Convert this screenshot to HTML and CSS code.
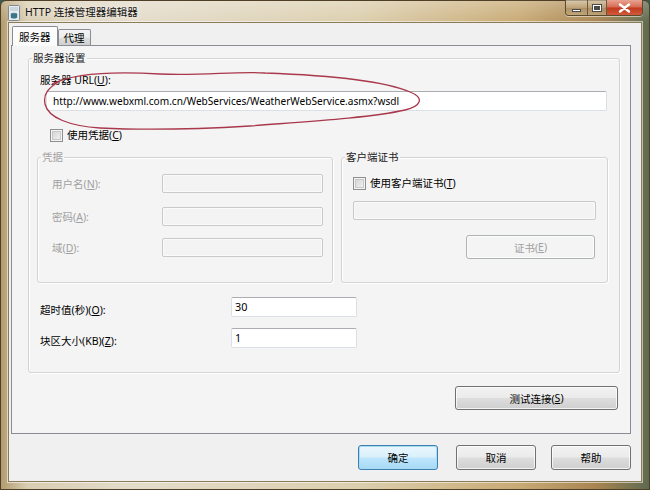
FILE: index.html
```html
<!DOCTYPE html>
<html>
<head>
<meta charset="utf-8">
<link rel="stylesheet" href="styles.css">
</head>
<body>
<div class="window">
  <div class="titlebar">
    <svg class="app-icon" width="14" height="16" viewBox="0 0 14 16">
      <rect x="1.5" y="0.5" width="11" height="15" rx="1" fill="#e8ecef" stroke="#7d8a93"/>
      <rect x="3" y="2" width="8" height="4" fill="#c9d6de"/>
      <ellipse cx="7" cy="9" rx="3.2" ry="1.3" fill="#4f8a9c"/>
      <path d="M3.8 9v3.2c0 .8 1.4 1.3 3.2 1.3s3.2-.5 3.2-1.3V9" fill="#3b7587"/>
    </svg>
    <span class="title">HTTP 连接管理器编辑器</span>
    <div class="caption-btns">
      <div class="cap cap-min"><span class="min-glyph"></span></div>
      <div class="cap cap-max"><span class="max-glyph"></span></div>
      <div class="cap cap-close">
        <svg width="13" height="10" viewBox="0 0 13 10"><path d="M2 1.5l9 7M11 1.5l-9 7" stroke="#fff" stroke-width="2.4" stroke-linecap="round"/></svg>
      </div>
    </div>
  </div>

  <div class="client">
    <div class="tabs">
      <div class="tab tab-active">服务器</div>
      <div class="tab">代理</div>
    </div>
    <div class="panel">
      <div class="group main-group">
        <div class="glabel">服务器设置</div>
        <div class="lbl url-lbl">服务器 URL(<u>U</u>):</div>
        <div class="input url-input">http://www.webxml.com.cn/WebServices/WeatherWebService.asmx?wsdl</div>
        <div class="check cred-check"><span class="box"></span><span>使用凭据(<u>C</u>)</span></div>

        <div class="subgroups">
          <div class="group cred-group disabled">
            <div class="glabel">凭据</div>
            <div class="frow r1"><span class="flabel">用户名(<u>N</u>):</span><span class="input dis-input"></span></div>
            <div class="frow r2"><span class="flabel">密码(<u>A</u>):</span><span class="input dis-input"></span></div>
            <div class="frow r3"><span class="flabel">域(<u>D</u>):</span><span class="input dis-input"></span></div>
          </div>
          <div class="group cert-group">
            <div class="glabel">客户端证书</div>
            <div class="check cert-check"><span class="box"></span><span>使用客户端证书(<u>T</u>)</span></div>
            <div class="input dis-input cert-input"></div>
            <div class="cert-btn-row"><div class="btn btn-disabled cert-btn">证书(<u>E</u>)</div></div>
          </div>
        </div>

        <div class="vrow v1"><span class="vlabel">超时值(秒)(<u>O</u>):</span><span class="input val-input">30</span></div>
        <div class="vrow v2"><span class="vlabel">块区大小(KB)(<u>Z</u>):</span><span class="input val-input">1</span></div>
      </div>
      <div class="test-row"><div class="btn test-btn">测试连接(<u>S</u>)</div></div>
    </div>
    <div class="dialog-btns">
      <div class="btn dlg-btn btn-default">确定</div>
      <div class="btn dlg-btn cancel-btn">取消</div>
      <div class="btn dlg-btn help-btn">帮助</div>
    </div>
  </div>

  <svg class="annot" width="650" height="490" viewBox="0 0 650 490">
    <path d="M52 84 C72 74 112 71 160 74 C200 76 238 71 265 73 C322 75 382 80 410 92 C425 98 421 106 405 110 C370 118 300 122 250 126 C200 129 140 130 100 128 C70 126 48 118 45 104 C43 94 48 88 60 81"
          fill="none" stroke="#a9384c" stroke-width="1.3"/>
  </svg>
</div>
</body>
</html>
```

FILE: styles.css
```css
* { box-sizing: border-box; }
html, body { margin: 0; padding: 0; }
body {
  width: 650px;
  height: 490px;
  overflow: hidden;
  font-family: "Noto Sans", "Noto Sans CJK SC", sans-serif;
  font-size: 10.5px;
  color: #000;
  background: #3c5a4c;
}
u { text-decoration: underline; text-underline-offset: 1px; }

.window {
  position: relative;
  width: 650px;
  height: 490px;
  border: 1px solid #4e3f26;
  border-radius: 6px 6px 0 0;
  background:
    linear-gradient(to bottom, rgba(255,255,255,0.25), rgba(255,255,255,0) 22px),
    linear-gradient(to right, #b39c70 0%, #d9cdb2 4%, #e4dccb 20%, #dccfae 55%, #c8aa74 80%, #a88450 92%, #5f6a50 100%);
  display: flex;
  flex-direction: column;
}

/* title bar */
.titlebar {
  height: 21px;
  display: flex;
  align-items: center;
  padding-left: 6px;
  position: relative;
}
.app-icon { margin-top: 2px; }
.title {
  margin-left: 4px;
  font-size: 10.5px;
  color: #111;
  text-shadow: 0 0 6px rgba(255,255,255,0.9);
}
.caption-btns {
  position: absolute;
  right: 6px;
  top: -1px;
  display: flex;
  height: 16px;
  border: 1px solid #5a4a30;
  border-top: none;
  border-radius: 0 0 4px 4px;
  overflow: hidden;
  box-shadow: 0 1px 0 rgba(255,255,255,0.5);
}
.cap {
  height: 15px;
  display: flex;
  align-items: center;
  justify-content: center;
  background: linear-gradient(to bottom, rgba(240,230,210,0.55), rgba(190,165,120,0.55) 50%, rgba(160,130,85,0.6) 51%, rgba(200,175,130,0.6));
}
.cap-min { width: 22px; border-right: 1px solid #6a5a40; }
.cap-max { width: 19px; border-right: 1px solid #6a5a40; }
.cap-close {
  width: 35px;
  background: linear-gradient(to bottom, #e9a492, #d46a52 48%, #c0391f 52%, #d2583a);
}
.min-glyph {
  width: 9px; height: 3px;
  margin-top: 5px;
  background: #fff;
  border: 1px solid #4a4a4a;
}
.max-glyph {
  width: 10px; height: 8px;
  border: 1px solid #4a4a4a;
  box-shadow: inset 0 0 0 1px #fff, inset 0 0 0 3px #4a4a4a;
  background: #fff;
}

/* client */
.client {
  margin: 0 7px 0 7px;
  height: 460px;
  background: #f0f0f0;
  border: 1px solid #8a7a58;
  box-shadow: 0 0 0 1px rgba(255,255,255,0.55);
  padding: 4px 0 0 2px;
}

.tabs {
  display: flex;
  align-items: flex-end;
  height: 18px;
  padding-left: 1px;
  position: relative;
  z-index: 1;
}
.tab {
  height: 16px;
  padding: 0 5px;
  display: flex;
  align-items: center;
  border: 1px solid #898c95;
  border-bottom: none;
  background: linear-gradient(to bottom, #f3f3f3, #ebebeb 50%, #dedede 51%, #cfcfcf);
  margin-right: -1px;
  border-radius: 2px 2px 0 0;
  color: #000;
}
.tab-active {
  height: 20px;
  margin-bottom: -1px;
  padding: 0 6px;
  background: #fcfcfc;
  position: relative;
  z-index: 2;
  margin-right: 0;
}

.panel {
  width: 620px;
  height: 389px;
  border: 1px solid #898c95;
  background: #f4f4f4;
  padding: 12px 0 0 16px;
}

.group {
  position: relative;
  border: 1px solid #d3d3d3;
  border-radius: 3px;
  box-shadow: inset 1px 1px 0 #fff, 1px 1px 0 #fff;
}
.glabel {
  position: absolute;
  top: -8px;
  left: 3px;
  padding: 0 1px;
  line-height: 14px;
  background: #f4f4f4;
  color: #1a1a1a;
}
.main-group {
  width: 592px;
  height: 315px;
  padding: 13px 0 0 0;
}
.lbl { line-height: 16px; margin-left: 11px; }
.input {
  display: block;
  height: 20px;
  background: #fff;
  border: 1px solid #dbdfe6;
  border-top-color: #abadb3;
  border-radius: 2px;
  line-height: 18px;
  padding-left: 3px;
  white-space: nowrap;
  overflow: hidden;
}
.url-input {
  margin: 3px 0 0 17px;
  width: 561px;
  font-size: 10.1px;
  padding-left: 6px;
}
.check {
  display: flex;
  align-items: center;
  line-height: 16px;
}
.box {
  width: 13px;
  height: 13px;
  border: 1px solid #8f8f8f;
  background: linear-gradient(135deg, #cfcfcf, #f7f7f7);
  box-shadow: inset 0 0 0 1px #f4f4f4, inset 0 0 0 2px #c8c8c8;
  margin-right: 4px;
}
.cred-check { margin: 16px 0 0 21px; }

.subgroups {
  display: flex;
  gap: 8px;
  margin: 14px 0 0 8px;
}
.cred-group { width: 296px; height: 126px; padding-top: 16px; }
.cert-group { width: 267px; height: 126px; padding-top: 17px; }
.disabled .glabel { color: #a3a3a3; }
.frow {
  display: flex;
  align-items: center;
  padding-left: 14px;
  color: #a0a0a0;
}
.flabel { width: 110px; }
.frow.r2 { margin-top: 14px; }
.frow.r3 { margin-top: 12px; }
.dis-input {
  width: 161px;
  height: 19px;
  background: #f3f3f3;
  border: 1px solid #c9c9c9;
  box-shadow: inset 0 0 0 1px #fafafa;
}
.cert-check { margin-left: 11px; }
.cert-input {
  width: 243px;
  margin: 10px 0 0 11px;
}
.cert-btn-row {
  display: flex;
  justify-content: flex-end;
  margin: 15px 12px 0 0;
}

.btn {
  display: flex;
  align-items: center;
  justify-content: center;
  border: 1px solid #707070;
  border-radius: 3px;
  background: linear-gradient(to bottom, #f2f2f2, #ebebeb 48%, #dddddd 52%, #cfcfcf);
  box-shadow: inset 0 0 0 1px rgba(255,255,255,0.75);
  color: #000;
}
.btn-disabled {
  border-color: #adb2b5;
  background: #f4f4f4;
  color: #a0a0a0;
  box-shadow: inset 0 0 0 1px #fcfcfc;
}
.cert-btn { width: 129px; height: 24px; }

.vrow {
  display: flex;
  align-items: center;
  padding-left: 11px;
}
.vrow.v1 { margin-top: 14px; }
.vrow.v2 { margin-top: 11px; }
.vlabel { width: 191px; padding-top: 4px; }
.val-input {
  width: 126px;
  padding-left: 3px;
  font-size: 10.8px;
}

.test-row {
  display: flex;
  justify-content: flex-end;
  margin: 13px 12px 0 0;
}
.test-btn { width: 163px; height: 24px; }

.dialog-btns {
  display: flex;
  margin: 11px 0 0 347px;
}
.dlg-btn { width: 80px; height: 25px; }
.btn-default {
  border-color: #3c7fb1;
  box-shadow: inset 0 0 0 1px #a8dcf2;
  background: linear-gradient(to bottom, #eaf6fd, #d9f0fc 48%, #bee6fd 52%, #a7d9f5);
}
.cancel-btn { margin-left: 18px; }
.help-btn { margin-left: 15px; }

.annot {
  position: absolute;
  left: -1px;
  top: -1px;
  pointer-events: none;
}
```
